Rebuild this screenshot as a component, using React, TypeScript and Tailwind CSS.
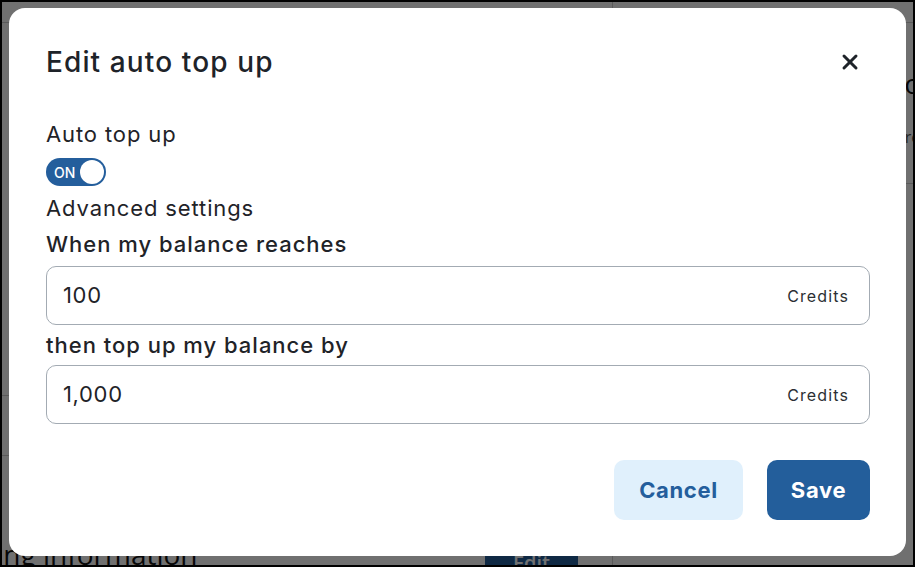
import { X } from "lucide-react";

const font = { fontFamily: "Inter, 'Noto Sans', sans-serif" };
const pageFont = { fontFamily: "'Open Sans', 'Noto Sans', sans-serif" };

function AmountField({ value }: { value: string }) {
  return (
    <div className="flex h-[59px] items-center justify-between rounded-[10px] border border-[#a3abb3] pl-4 pr-5">
      <span className="text-[22px] tracking-[0.03em] text-[#1f2328]">{value}</span>
      <span className="text-[16px] tracking-[0.07em] text-[#2b2f33]">Credits</span>
    </div>
  );
}

function Background() {
  return (
    <div className="flex h-full w-full bg-white text-[#111]" style={pageFont}>
      <div className="flex w-[611px] shrink-0 flex-col border-r border-[#ccc]">
        <div className="mt-[20px] shrink-0 border-t border-[#ccc]" />
        <div className="-ml-[200px] flex h-[372px] shrink-0 flex-col whitespace-nowrap">
          <div className="pt-[42px] text-[28px] leading-none">Subscription</div>
          <div className="pt-[46px] text-[16px] text-[#888]">Plan Type</div>
          <div className="pt-[12px] text-[16px] text-[#c26a00]">Chai</div>
          <div className="pt-[38px] text-[16px] text-[#888]">Plan name</div>
          <div className="pt-[8px] text-[18px]">Co</div>
          <div className="pt-[32px] text-[16px] text-[#888]">Renewal date</div>
          <div className="pt-[14px] text-[16px]">Lost</div>
        </div>
        <div className="shrink-0 border-t border-[#ccc]" />
        <div className="h-[59px] shrink-0" />
        <div className="shrink-0 border-t border-[#ccc]" />
        <div className="flex shrink-0 items-start justify-between pr-[34px] pt-[84px]">
          <div className="-ml-[45px] whitespace-nowrap text-[28px] leading-none">Billing information</div>
          <div className="rounded bg-[#245e9c] px-7 py-2 text-[20px] font-semibold text-white">Edit</div>
        </div>
      </div>
      <div className="flex min-w-0 flex-1 flex-col overflow-hidden whitespace-nowrap">
        <div className="mt-[20px] border-t border-[#ccc]" />
        <div className="pl-[100px] pt-[46px] text-[28px] leading-none">Payment method</div>
        <div className="pl-[282px] pt-[28px] text-[16px] text-[#555]">Preferred</div>
        <div className="mt-[34px] border-t border-[#ccc]" />
      </div>
    </div>
  );
}

export default function App() {
  return (
    <div className="relative h-[567px] w-[915px] overflow-hidden border-2 border-black" style={font}>
      <Background />
      <div className="absolute inset-0 flex items-start justify-start bg-black/[0.56] pl-[7px] pt-[6px]">
        <div className="flex h-[548px] w-[897px] flex-col rounded-[16px] bg-white pl-[37px] pr-[36px] text-[#1f2328]">
          <div className="flex items-center justify-between pt-[36px]">
            <h2 className="text-[28px] font-medium leading-[36px] tracking-[0.04em] text-[#1e2329]">
              Edit auto top up
            </h2>
            <button className="mr-[8px] text-[#1e2329]">
              <X size={24} strokeWidth={3} />
            </button>
          </div>

          <div className="mt-[40px] text-[22px] leading-[28px] tracking-[0.04em]">Auto top up</div>
          <div className="mt-[10px] flex h-[28px] w-[60px] items-center justify-between rounded-full bg-[#245e9c] pl-[8px] pr-[2px]">
            <span className="text-[14px] font-medium text-white">ON</span>
            <span className="h-[24px] w-[24px] rounded-full bg-white" />
          </div>
          <div className="mt-[8px] text-[22px] leading-[28px] tracking-[0.04em]">Advanced settings</div>

          <div className="mt-[8px] text-[22px] font-medium leading-[28px] tracking-[0.045em]">
            When my balance reaches
          </div>
          <div className="mt-[8px]">
            <AmountField value="100" />
          </div>
          <div className="mt-[6px] text-[22px] font-medium leading-[28px] tracking-[0.045em]">
            then top up my balance by
          </div>
          <div className="mt-[6px]">
            <AmountField value="1,000" />
          </div>

          <div className="mt-[36px] flex justify-end gap-[24px]">
            <button className="h-[60px] w-[129px] rounded-[10px] bg-[#e0f0fc] text-[22px] font-bold tracking-[0.03em] text-[#245e9c]">
              Cancel
            </button>
            <button className="h-[60px] w-[103px] rounded-[10px] bg-[#235e9b] text-[22px] font-bold tracking-[0.03em] text-white">
              Save
            </button>
          </div>
        </div>
      </div>
    </div>
  );
}
